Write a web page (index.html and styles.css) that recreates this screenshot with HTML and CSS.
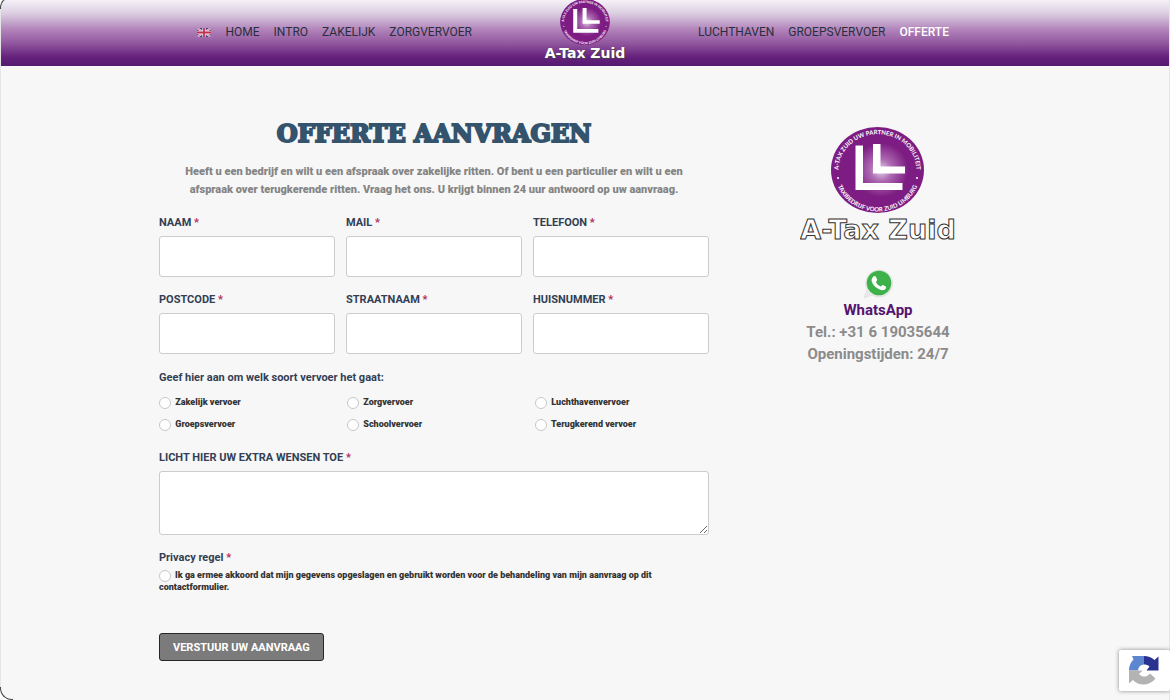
FILE: index.html
```
<!DOCTYPE html>
<html lang="nl">
<head>
  <meta charset="UTF-8">
  <meta name="viewport" content="width=device-width, initial-scale=1">
  <title>A-Tax Zuid - Offerte aanvragen</title>
  <link rel="stylesheet" href="styles.css">
</head>
<body>
  <!-- Menu -->
  <header class="site-header">
    <nav class="menu menu-left">
      <a href="#" class="flag" aria-label="English">
        <svg width="14" height="9" viewBox="0 0 14 9">
          <rect width="14" height="9" fill="#39387f"/>
          <path d="M0 0L14 9M14 0L0 9" stroke="#f3e3ee" stroke-width="2"/>
          <path d="M0 0L14 9M14 0L0 9" stroke="#c8405c" stroke-width="0.6"/>
          <path d="M7 0V9M0 4.500H14" stroke="#f3e3ee" stroke-width="3.400"/>
          <path d="M7 0V9M0 4.500H14" stroke="#c2304f" stroke-width="1.800"/>
        </svg>
      </a>
      <a href="#">HOME</a>
      <a href="#">INTRO</a>
      <a href="#">ZAKELIJK</a>
      <a href="#">ZORGVERVOER</a>
    </nav>
    <a href="#" class="header-logo">
      <svg width="50" height="46" viewBox="0 0 93 86">
        <use href="#badge"/>
      </svg>
      <span class="logo-name">A-Tax Zuid</span>
    </a>
    <nav class="menu menu-right">
      <a href="#">LUCHTHAVEN</a>
      <a href="#">GROEPSVERVOER</a>
      <a href="#" class="active">OFFERTE</a>
    </nav>
  </header>

  <main class="page">
    <!-- Formulier -->
    <section class="offer">
      <h1>OFFERTE AANVRAGEN</h1>
      <p class="intro">Heeft u een bedrijf en wilt u een afspraak over zakelijke ritten. Of bent u een particulier en wilt u een afspraak over terugkerende ritten. Vraag het ons. U krijgt binnen 24 uur antwoord op uw aanvraag.</p>

      <form>
        <div class="fields">
          <div class="field">
            <label for="naam">NAAM <span class="req">*</span></label>
            <input type="text" id="naam">
          </div>
          <div class="field">
            <label for="mail">MAIL <span class="req">*</span></label>
            <input type="email" id="mail">
          </div>
          <div class="field">
            <label for="telefoon">TELEFOON <span class="req">*</span></label>
            <input type="tel" id="telefoon">
          </div>
          <div class="field">
            <label for="postcode">POSTCODE <span class="req">*</span></label>
            <input type="text" id="postcode">
          </div>
          <div class="field">
            <label for="straat">STRAATNAAM <span class="req">*</span></label>
            <input type="text" id="straat">
          </div>
          <div class="field">
            <label for="huisnummer">HUISNUMMER <span class="req">*</span></label>
            <input type="text" id="huisnummer">
          </div>
        </div>

        <fieldset class="transport">
          <legend>Geef hier aan om welk soort vervoer het gaat:</legend>
          <div class="options">
            <label><input type="radio" name="vervoer"> Zakelijk vervoer</label>
            <label><input type="radio" name="vervoer"> Zorgvervoer</label>
            <label><input type="radio" name="vervoer"> Luchthavenvervoer</label>
            <label><input type="radio" name="vervoer"> Groepsvervoer</label>
            <label><input type="radio" name="vervoer"> Schoolvervoer</label>
            <label><input type="radio" name="vervoer"> Terugkerend vervoer</label>
          </div>
        </fieldset>

        <div class="field message">
          <label for="wensen">LICHT HIER UW EXTRA WENSEN TOE <span class="req">*</span></label>
          <textarea id="wensen"></textarea>
        </div>

        <fieldset class="privacy">
          <legend>Privacy regel <span class="req">*</span></legend>
          <label><input type="radio" name="privacy">Ik ga ermee akkoord dat mijn gegevens opgeslagen en gebruikt worden voor de behandeling van mijn aanvraag op dit contactformulier.</label>
        </fieldset>

        <button type="submit">VERSTUUR UW AANVRAAG</button>
      </form>
    </section>

    <!-- Contact -->
    <aside class="contact">
      <svg class="logo" width="156" height="118" viewBox="0 0 156 118">
        <defs>
          <radialGradient id="glow" cx="50" cy="43" r="27" gradientUnits="userSpaceOnUse">
            <stop offset="0" stop-color="#e6d3ea"/>
            <stop offset="0.400" stop-color="#ad6bb2"/>
            <stop offset="1" stop-color="#7d1d83"/>
          </radialGradient>
          <path id="arcTop" d="M8 49A39 36 0 1 1 85 49"/>
          <path id="arcBottom" d="M4 45A42.500 39.500 0 0 0 89 45"/>
          <g id="badge">
            <ellipse cx="46.500" cy="43" rx="46.500" ry="43" fill="#7d1d83"/>
            <ellipse cx="46.500" cy="43" rx="34" ry="31" fill="url(#glow)"/>
            <path d="M24.500 18.500H32V56H71.500V63H24.500Z" fill="#fff"/>
            <path d="M42 17H49.500V39.500H74V46.500H42Z" fill="#fff"/>
            <g class="badge-text">
              <text><textPath href="#arcTop" startOffset="50%">A-TAX ZUID UW PARTNER IN MOBILITEIT</textPath></text>
              <text><textPath href="#arcBottom" startOffset="50%">TAXIBEDRIJF VOOR ZUID LIMBURG</textPath></text>
            </g>
            <circle cx="7" cy="51" r="1" fill="#fff"/>
            <circle cx="86" cy="51" r="1" fill="#fff"/>
          </g>
        </defs>
        <svg x="31" width="93" height="86"><use href="#badge"/></svg>
        <text class="wordmark" x="78" y="112">A-Tax Zuid</text>
      </svg>

      <a href="#" class="whatsapp">
        <svg width="30" height="30" viewBox="0 0 30 30">
          <path d="M1 29L4 20.500A13.500 13.500 0 1 1 9 26Z" fill="#e9e9e9" stroke="#d9dadb" stroke-width="0.600"/>
          <circle cx="16" cy="14" r="12.300" fill="#3db14a"/>
          <path d="M10.500 7.500C11.500 6.800 12.500 7 13 8L14.200 10.800C14.500 11.500 13 12.500 13 13.100C13.800 15.200 15.400 16.600 17.500 17.400C18.200 17.500 19 15.700 19.900 16L22.700 17.400C23.500 17.900 23 19.500 22.200 20.300C20.500 21.600 18.300 21.300 16 20.200C12.500 18.700 10.200 16 8.900 13C8.100 10.500 9 8.500 10.500 7.500Z" fill="#fff"/>
        </svg>
        <span>WhatsApp</span>
      </a>
      <p>Tel.: +31 6 19035644</p>
      <p>Openingstijden: 24/7</p>
    </aside>
  </main>

  <!-- reCAPTCHA -->
  <div class="recaptcha">
    <svg width="30" height="29" viewBox="0 0 30 29">
      <path d="M3 0H15V8.500C11.500 8.500 9.500 10.500 9 14.500H0C0 10 1.500 6.500 4.500 3.500Z" fill="#5c86d0"/>
      <path d="M15 0C19 0 22.500 1.500 25.500 4L29.500 0.500V14.500H17.500L20.500 10.500C19 9 17 8.500 15 8.500Z" fill="#2a328f"/>
      <path d="M0 14.500H13.500L10 18C14 22 18 21 21 17.500L26.500 22.500C20.500 30 10 30.500 4 24L0 27.500Z" fill="#b3b3b3"/>
    </svg>
  </div>
</body>
</html>
```
FILE: styles.css
```
* {
  box-sizing: border-box;
}
body {
  margin: 0;
  min-height: 100vh;
  background-color: #f7f7f7;
  border-left: 1px solid #e6e6e6;
  border-right: 1px solid #e6e6e6;
  font-family: Roboto, Arial, sans-serif;
}
/* Afgeronde hoeken van het venster */
body::before,
body::after {
  content: "";
  position: fixed;
  left: 0;
  width: 12px;
  height: 12px;
  border-left: 1px solid #444;
  z-index: 5;
}
body::before {
  top: -4px;
  border-top: 1px solid #444;
  border-top-left-radius: 12px;
  box-shadow: -3px -3px 0 #fff;
}
body::after {
  bottom: 0;
  border-bottom: 1px solid #444;
  border-bottom-left-radius: 12px;
  box-shadow: -3px 3px 0 #fff;
}
a {
  text-decoration: none;
}
/* Menu */
.site-header {
  display: grid;
  grid-template-columns: 1fr 226px 1fr;
  height: 66px;
  background: linear-gradient(#f5f1f7 0%, #dccfe2 20%, #b183ba 45%, #92589f 65%, #64207c 87%, #561a70 100%);
}
.menu {
  display: flex;
  align-items: center;
  gap: 14px;
  padding-bottom: 2px;
  font-size: 12px;
}
.menu-left {
  justify-content: flex-end;
}
.menu a {
  color: #26303d;
}
.menu a.active {
  color: #fff;
  font-weight: 500;
}
.flag svg {
  display: block;
  border-radius: 2px;
}
.header-logo {
  display: flex;
  flex-direction: column;
  align-items: center;
  color: #fff;
}
.header-logo svg {
  margin-top: -1px;
}
.logo-name {
  font: bold 14px/16px "DejaVu Sans", sans-serif;
  text-shadow: 1px 1px 0 #444;
}
/* Inhoud */
.page {
  display: grid;
  grid-template-columns: 550px 1fr;
  gap: 36px;
  max-width: 852px;
  margin: 0 auto;
  padding: 54px 0 24px;
}
h1 {
  margin: 0 0 15px;
  font: bold 24px/28px "DejaVu Serif", serif;
  color: #34536d;
  text-align: center;
  -webkit-text-stroke: 2px #34536d;
}
.intro {
  margin: 0 0 16px;
  padding: 0 16px;
  font-size: 11px;
  font-weight: 900;
  line-height: 18px;
  color: #858585;
  text-align: center;
}
.fields {
  display: grid;
  grid-template-columns: repeat(3, 1fr);
  gap: 15px 11px;
}
.field label,
legend {
  display: block;
  padding: 0;
  font-size: 11px;
  font-weight: bold;
  line-height: 16px;
  color: #323f54;
}
.req {
  color: #b02a5b;
}
input[type="text"],
input[type="email"],
input[type="tel"],
textarea {
  display: block;
  width: 100%;
  height: 41px;
  margin-top: 5px;
  padding: 4px 8px;
  border: 1px solid #ccc;
  border-radius: 3px;
  background: #fff;
  font: 12px Roboto, sans-serif;
}
textarea {
  height: 64px;
  resize: vertical;
}
fieldset {
  margin: 0;
  padding: 0;
  border: none;
}
.transport {
  margin-top: 16px;
}
.options {
  display: grid;
  grid-template-columns: repeat(3, 1fr);
  gap: 0 14px;
  margin-top: 5px;
}
.options label,
.privacy label {
  font-size: 9px;
  font-weight: 900;
  color: #333;
}
.options label {
  line-height: 22px;
}
input[type="radio"] {
  appearance: none;
  width: 12px;
  height: 12px;
  margin: 0 4px 0 0;
  border: 1px solid #c8c8c8;
  border-radius: 50%;
  background: #fff;
  vertical-align: -4px;
}
.options input[type="radio"] {
  margin-right: 2px;
}
.message {
  margin-top: 15px;
}
.privacy {
  margin-top: 15px;
}
.privacy label {
  display: block;
  margin-top: 4px;
  line-height: 11px;
}
button {
  display: block;
  height: 28px;
  margin-top: 40px;
  padding: 0 13px;
  border: 1px solid #26262b;
  border-radius: 3px;
  background: #7b7b7b;
  color: #fff;
  font: bold 11px Roboto, sans-serif;
}
/* Contact */
.contact {
  display: flex;
  flex-direction: column;
  align-items: center;
  padding-top: 7px;
  font-size: 15px;
  font-weight: bold;
  line-height: 22px;
  color: #8b8b8b;
}
.contact p {
  margin: 0;
}
.badge-text {
  fill: #fff;
  font: bold 6px Lato, sans-serif;
  text-anchor: middle;
}
.wordmark {
  fill: #fff;
  stroke: #333;
  stroke-width: 1px;
  font: bold 27px "DejaVu Sans", sans-serif;
  text-anchor: middle;
}
.whatsapp {
  display: flex;
  flex-direction: column;
  align-items: center;
  margin-top: 24px;
  color: #54146f;
}
/* reCAPTCHA */
.recaptcha {
  position: fixed;
  right: 0;
  bottom: 9px;
  display: flex;
  align-items: center;
  width: 51px;
  height: 41px;
  padding-left: 10px;
  border-radius: 2px;
  background: #fff;
  box-shadow: 0 0 4px #888;
}
```
